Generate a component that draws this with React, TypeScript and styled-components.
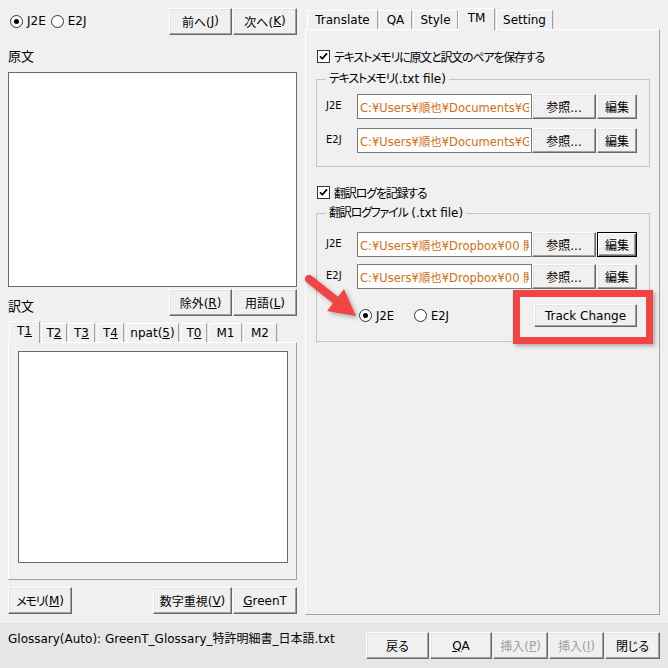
import React from "react";
import styled, { createGlobalStyle, css } from "styled-components";

const GlobalStyle = createGlobalStyle`
  html, body { margin: 0; padding: 0; background: #f0f0f0; }
  body {
    font-family: "DejaVu Sans", "Noto Sans CJK JP", sans-serif;
    font-size: 12px;
    color: #000;
    font-feature-settings: "palt" 1;
  }
  * { box-sizing: border-box; }
`;

const Window = styled.div`
  position: relative;
  width: 668px;
  height: 668px;
  display: flex;
  flex-direction: column;
  background: #f0f0f0;
  overflow: hidden;
`;

const Main = styled.div`
  display: flex;
  gap: 8px;
  padding: 0 8px;
  height: 623px;
`;

const LeftCol = styled.div`
  width: 289px;
  display: flex;
  flex-direction: column;
  padding-top: 7px;
`;

const RightCol = styled.div`
  width: 355px;
  display: flex;
  flex-direction: column;
  padding-top: 8px;
`;

const TopRow = styled.div`
  height: 28px;
  display: flex;
  align-items: center;
  justify-content: space-between;
`;

const RadioGroup = styled.div<{ $pl?: number; $gap?: number }>`
  display: flex;
  align-items: center;
  gap: ${(p) => p.$gap ?? 5}px;
  padding-left: ${(p) => p.$pl ?? 2}px;
`;

const RadioItem = styled.label`
  display: flex;
  align-items: center;
  gap: 4px;
  line-height: 16px;
`;

const RadioCircle = styled.span<{ $checked?: boolean }>`
  width: 13px;
  height: 13px;
  border-radius: 50%;
  border: 1px solid #333;
  background: #fff;
  display: inline-flex;
  align-items: center;
  justify-content: center;
  flex-shrink: 0;
  &::after {
    content: "";
    width: 5px;
    height: 5px;
    border-radius: 50%;
    background: ${(p) => (p.$checked ? "#000" : "transparent")};
  }
`;

const ButtonGroup = styled.div`
  display: flex;
  gap: 1px;
`;

const Button = styled.button<{ $w: number; $h?: number; $default?: boolean; $disabled?: boolean }>`
  width: ${(p) => p.$w}px;
  height: ${(p) => p.$h ?? 27}px;
  padding: 0;
  margin: 0;
  font: inherit;
  font-size: 12px;
  color: ${(p) => (p.$disabled ? "#a0a0a0" : "#000")};
  background: #f0f0f0;
  border: 1px solid;
  border-color: #fff #696969 #696969 #fff;
  box-shadow: inset -1px -1px 0 #a0a0a0, inset 1px 1px 0 #e3e3e3;
  display: flex;
  align-items: center;
  justify-content: center;
  white-space: nowrap;
  flex-shrink: 0;
  ${(p) =>
    p.$default &&
    css`
      border-color: #000;
      box-shadow: inset 1px 1px 0 #fff, inset -1px -1px 0 #696969, inset -2px -2px 0 #a0a0a0;
    `}
`;

const Mn = styled.span`
  text-decoration: underline;
  text-underline-offset: 1px;
`;

const Jp = styled.span`
  letter-spacing: -1.2px;
`;

const SectionLabel = styled.div`
  height: 17px;
  line-height: 17px;
  font-size: 13px;
  margin: 13px 0 7px;
`;

const WhiteBox = styled.div<{ $h: number }>`
  height: ${(p) => p.$h}px;
  background: #fff;
  border: 1px solid #6a6a6a;
`;

const MidRow = styled.div`
  margin-top: 2px;
  height: 27px;
  display: flex;
  align-items: flex-end;
  justify-content: space-between;
`;

const MidLabel = styled.div`
  line-height: 17px;
  font-size: 13px;
  padding-bottom: 1px;
`;

const TabStrip = styled.div<{ $mt?: number }>`
  display: flex;
  align-items: flex-end;
  margin-top: ${(p) => p.$mt ?? 0}px;
  position: relative;
  z-index: 1;
`;

const Tab = styled.div<{ $w: number; $ml: number; $active?: boolean }>`
  width: ${(p) => p.$w}px;
  margin-left: ${(p) => p.$ml}px;
  height: ${(p) => (p.$active ? 22 : 19)}px;
  background: #f0f0f0;
  border-top: 1px solid #fff;
  border-left: 1px solid #fff;
  border-right: 1px solid #a0a0a0;
  box-shadow: 1px 0 0 #e3e3e3;
  display: flex;
  align-items: center;
  justify-content: center;
  white-space: nowrap;
  line-height: 16px;
  ${(p) =>
    p.$active &&
    css`
      margin-bottom: -1px;
      padding-bottom: 3px;
    `}
`;

const TabPanel = styled.div<{ $h: number; $pad: string }>`
  height: ${(p) => p.$h}px;
  padding: ${(p) => p.$pad};
  background: #f0f0f0;
  border: 1px solid;
  border-color: #fff #a0a0a0 #a0a0a0 #fff;
  display: flex;
  flex-direction: column;
`;

const BottomRow = styled.div`
  margin-top: 7px;
  height: 27px;
  display: flex;
  justify-content: space-between;
`;

const CheckRow = styled.label<{ $mt: number }>`
  margin-top: ${(p) => p.$mt}px;
  height: 16px;
  display: flex;
  align-items: center;
  gap: 4px;
  padding-left: 1px;
`;

const CheckBox = styled.span`
  width: 13px;
  height: 13px;
  border: 1px solid #333;
  background: #fff;
  display: inline-flex;
  align-items: center;
  justify-content: center;
  flex-shrink: 0;
`;

const Group = styled.fieldset<{ $mt: number; $pt: number; $pb: number }>`
  margin: ${(p) => p.$mt}px 0 0;
  width: 334px;
  padding: ${(p) => p.$pt}px 12px ${(p) => p.$pb}px 9px;
  border: 1px solid #c4c4c4;
  min-width: 0;
`;

const Legend = styled.legend`
  margin-left: 0;
  padding: 0 3px;
  line-height: 16px;
  height: 16px;
`;

const Rows = styled.div<{ $gap: number }>`
  display: flex;
  flex-direction: column;
  gap: ${(p) => p.$gap}px;
`;

const FileRow = styled.div`
  display: flex;
  height: 25px;
`;

const RowLabel = styled.div`
  width: 31px;
  font-size: 10px;
  line-height: 14px;
  padding-top: 5px;
  flex-shrink: 0;
`;

const PathInput = styled.input`
  width: 175px;
  height: 25px;
  margin: 0;
  padding: 0 2px;
  font: inherit;
  font-size: 11.5px;
  color: #d26e14;
  background: #fff;
  border: 1px solid #7a7a7a;
  outline: none;
`;

const PathButtons = styled.div`
  display: flex;
  gap: 1px;
`;

const ModeRow = styled.div`
  margin-top: 15px;
  height: 23px;
  display: flex;
  align-items: center;
  justify-content: space-between;
  padding-left: 33px;
`;

const ModeRadios = styled.div`
  display: flex;
  align-items: center;
  gap: 20px;
  font-size: 11.5px;
`;

const StatusBar = styled.div`
  height: 45px;
  background: #e6e6e6;
  display: flex;
  align-items: flex-start;
  justify-content: space-between;
  padding: 9px 8px 0;
`;

const StatusText = styled.div`
  line-height: 14px;
  white-space: nowrap;
`;

const RedFrame = styled.div`
  position: absolute;
  left: 513px;
  top: 290px;
  width: 140px;
  height: 54px;
  border: 7px solid #f24444;
  box-shadow: 2px 2px 4px rgba(0, 0, 0, 0.3);
  pointer-events: none;
`;

const ArrowSvg = styled.svg`
  position: absolute;
  left: 300px;
  top: 270px;
  filter: drop-shadow(2px 2px 2px rgba(0, 0, 0, 0.3));
  pointer-events: none;
`;

const Radio = ({ checked, label }: { checked?: boolean; label: string }) => (
  <RadioItem>
    <RadioCircle $checked={checked} />
    {label}
  </RadioItem>
);

const Check = ({ label, mt }: { label: string; mt: number }) => (
  <CheckRow $mt={mt}>
    <CheckBox>
      <svg width="11" height="11" viewBox="0 0 11 11">
        <path d="M2 5.2 L4.3 7.8 L9 2.4" fill="none" stroke="#000" strokeWidth="1.7" />
      </svg>
    </CheckBox>
    <Jp>{label}</Jp>
  </CheckRow>
);

const leftTabs = [
  { key: "t1", node: <>T<Mn>1</Mn></>, w: 31, ml: 1, active: true },
  { key: "t2", node: <>T<Mn>2</Mn></>, w: 26, ml: 1 },
  { key: "t3", node: <>T<Mn>3</Mn></>, w: 27, ml: 1 },
  { key: "t4", node: <>T<Mn>4</Mn></>, w: 27, ml: 2 },
  { key: "np", node: <>npat(<Mn>5</Mn>)</>, w: 53, ml: 2 },
  { key: "t0", node: <>T<Mn>0</Mn></>, w: 26, ml: 2 },
  { key: "m1", node: <>M1</>, w: 33, ml: 2 },
  { key: "m2", node: <>M2</>, w: 34, ml: 1 },
];

const rightTabs = [
  { key: "tr", label: "Translate", w: 71, ml: 2 },
  { key: "qa", label: "QA", w: 33, ml: 1 },
  { key: "st", label: "Style", w: 45, ml: 1 },
  { key: "tm", label: "TM", w: 37, ml: 0, active: true },
  { key: "se", label: "Setting", w: 57, ml: 1 },
];

const FileLine = ({ label, path, def }: { label: string; path: string; def?: boolean }) => (
  <FileRow>
    <RowLabel>{label}</RowLabel>
    <PathInput readOnly value={path} />
    <PathButtons>
      <Button $w={64} $h={25}>参照...</Button>
      <Button $w={40} $h={25} $default={def}>編集</Button>
    </PathButtons>
  </FileRow>
);

export default function App() {
  const docPath = "C:¥Users¥順也¥Documents¥GreenT¥TM";
  const logPath = "C:¥Users¥順也¥Dropbox¥00 開発¥GreenT";
  return (
    <>
      <GlobalStyle />
      <Window>
        <Main>
          <LeftCol>
            <TopRow>
              <RadioGroup>
                <Radio checked label="J2E" />
                <Radio label="E2J" />
              </RadioGroup>
              <ButtonGroup>
                <Button $w={63}>前へ(<Mn>J</Mn>)</Button>
                <Button $w={64}>次へ(<Mn>K</Mn>)</Button>
              </ButtonGroup>
            </TopRow>
            <SectionLabel>原文</SectionLabel>
            <WhiteBox $h={215} />
            <MidRow>
              <MidLabel>訳文</MidLabel>
              <ButtonGroup>
                <Button $w={63}>除外(<Mn>R</Mn>)</Button>
                <Button $w={64}>用語(<Mn>L</Mn>)</Button>
              </ButtonGroup>
            </MidRow>
            <TabStrip $mt={5}>
              {leftTabs.map((t) => (
                <Tab key={t.key} $w={t.w} $ml={t.ml} $active={t.active}>
                  {t.node}
                </Tab>
              ))}
            </TabStrip>
            <TabPanel $h={238} $pad="8px 8px 0 9px">
              <WhiteBox $h={212} />
            </TabPanel>
            <BottomRow>
              <Button $w={64}><Jp>メモリ</Jp>(<Mn>M</Mn>)</Button>
              <ButtonGroup>
                <Button $w={79}>数字重視(<Mn>V</Mn>)</Button>
                <Button $w={64}><Mn>G</Mn>reenT</Button>
              </ButtonGroup>
            </BottomRow>
          </LeftCol>
          <RightCol>
            <TabStrip>
              {rightTabs.map((t) => (
                <Tab key={t.key} $w={t.w} $ml={t.ml} $active={t.active}>
                  {t.label}
                </Tab>
              ))}
            </TabStrip>
            <TabPanel $h={586} $pad="0 0 0 10px">
              <Check mt={18} label="テキストメモリに原文と訳文のペアを保存する" />
              <Group $mt={7} $pt={7} $pb={13}>
                <Legend><Jp>テキストメモリ</Jp>(.txt file)</Legend>
                <Rows $gap={9}>
                  <FileLine label="J2E" path={docPath} />
                  <FileLine label="E2J" path={docPath} />
                </Rows>
              </Group>
              <Check mt={17} label="翻訳ログを記録する" />
              <Group $mt={5} $pt={11} $pb={14}>
                <Legend><Jp>翻訳ログファイル</Jp> (.txt file)</Legend>
                <Rows $gap={7}>
                  <FileLine label="J2E" path={logPath} def />
                  <FileLine label="E2J" path={logPath} />
                </Rows>
                <ModeRow>
                  <ModeRadios>
                    <Radio checked label="J2E" />
                    <Radio label="E2J" />
                  </ModeRadios>
                  <Button $w={103} $h={23}>Track Change</Button>
                </ModeRow>
              </Group>
            </TabPanel>
          </RightCol>
        </Main>
        <StatusBar>
          <StatusText>Glossary(Auto): GreenT_Glossary_特許明細書_日本語.txt</StatusText>
          <ButtonGroup>
            <Button $w={63}>戻る</Button>
            <Button $w={62}><Mn>Q</Mn>A</Button>
            <Button $w={55} $disabled>挿入(<Mn>P</Mn>)</Button>
            <Button $w={55} $disabled>挿入(<Mn>I</Mn>)</Button>
            <Button $w={55}>閉じる</Button>
          </ButtonGroup>
        </StatusBar>
        <RedFrame />
        <ArrowSvg width="70" height="60" viewBox="0 0 70 60">
          <line x1="9" y1="9" x2="38" y2="32" stroke="#f24444" strokeWidth="8" strokeLinecap="round" />
          <polygon points="56,46 27,41 44,19" fill="#f24444" />
        </ArrowSvg>
      </Window>
    </>
  );
}
